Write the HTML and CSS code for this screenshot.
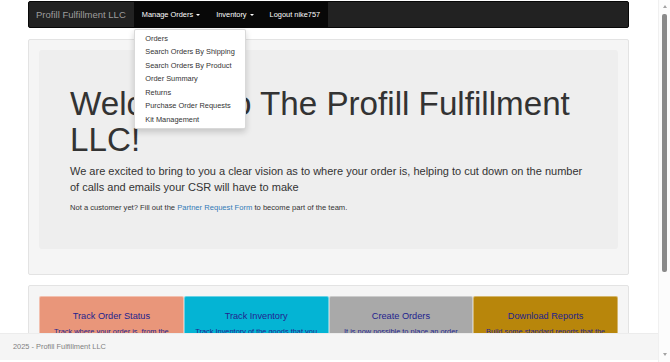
FILE: index.html
```html
<!DOCTYPE html>
<html lang="en">
<head>
    <meta charset="UTF-8">
    <meta name="viewport" content="width=device-width, initial-scale=1.0">
    <title>Profill Fulfillment LLC</title>
    <link rel="stylesheet" href="styles.css">
</head>
<body>
    <div class="viewport">
        <div class="page">
            <div class="container">
                <nav class="navbar">
                    <a class="brand" href="#">Profill Fulfillment LLC</a>
                    <ul class="nav">
                        <li class="dropdown">
                            <a href="#">Manage Orders <span class="caret"></span></a>
                            <ul class="dropdown-menu">
                                <li><a href="#">Orders</a></li>
                                <li><a href="#">Search Orders By Shipping</a></li>
                                <li><a href="#">Search Orders By Product</a></li>
                                <li><a href="#">Order Summary</a></li>
                                <li><a href="#">Returns</a></li>
                                <li><a href="#">Purchase Order Requests</a></li>
                                <li><a href="#">Kit Management</a></li>
                            </ul>
                        </li>
                        <li><a href="#">Inventory <span class="caret"></span></a></li>
                        <li><a href="#">Logout nike757</a></li>
                    </ul>
                </nav>

                <div class="well">
                    <div class="jumbotron">
                        <h1>Welcome To The Profill Fulfillment LLC!</h1>
                        <p class="lead">We are excited to bring to you a clear vision as to where your order is, helping to cut down on the number of calls and emails your CSR will have to make</p>
                        <p>Not a customer yet? Fill out the <a href="#">Partner Request Form</a> to become part of the team.</p>
                    </div>
                </div>

                <div class="well">
                    <div class="tiles">
                        <div class="tile tile-salmon">
                            <h4>Track Order Status</h4>
                            <p>Track where your order is, from the warehouse floor to your door.</p>
                        </div>
                        <div class="tile tile-cyan">
                            <h4>Track Inventory</h4>
                            <p>Track Inventory of the goods that you have stored with us.</p>
                        </div>
                        <div class="tile tile-gray">
                            <h4>Create Orders</h4>
                            <p>It is now possible to place an order right from this site.</p>
                        </div>
                        <div class="tile tile-gold">
                            <h4>Download Reports</h4>
                            <p>Build some standard reports that the team uses every day.</p>
                        </div>
                    </div>
                </div>
            </div>
        </div>

        <div class="scrollbar">
            <span class="arrow-up"></span>
            <div class="thumb"></div>
            <span class="arrow-down"></span>
        </div>
    </div>

    <footer class="footer">2025 - Profill Fulfillment LLC</footer>
</body>
</html>
```

FILE: styles.css
```css
html, body {
    margin: 0;
    height: 100%;
    overflow: hidden;
}

body {
    font-family: 'Liberation Sans', Arial, Helvetica, sans-serif;
    font-size: 7.4px;
    line-height: 1.42857;
    color: #333;
    background: #fff;
}

a {
    text-decoration: none;
}

ul {
    list-style: none;
    margin: 0;
    padding: 0;
}

.viewport {
    display: flex;
    height: 100%;
}

.page {
    flex: 1;
    padding-right: 1px;
    overflow: hidden;
}

.container {
    width: 601px;
    margin: 0 auto;
}

/* top navbar */
.navbar {
    display: flex;
    height: 27px;
    box-sizing: border-box;
    margin-top: 1px;
    margin-bottom: 11px;
    background: #222;
    border: 1px solid #080808;
    border-radius: 2px;
}

.brand {
    padding: 0 8px 0 7px;
    font-size: 9.5px;
    line-height: 25px;
    color: #9d9d9d;
}

.nav {
    display: flex;
    background: #080808;
}

.nav > li {
    position: relative;
}

.nav > li > a {
    display: block;
    padding: 0 8px;
    line-height: 25px;
    color: #fff;
}

.caret {
    display: inline-block;
    width: 0;
    height: 0;
    margin-left: 1px;
    vertical-align: middle;
    border-top: 2px solid #fff;
    border-left: 2px solid transparent;
    border-right: 2px solid transparent;
}

.dropdown-menu {
    position: absolute;
    top: calc(100% + 2px);
    left: 0;
    z-index: 10;
    padding: 2px 0;
    background: #fff;
    border: 1px solid rgba(0,0,0,0.15);
    border-radius: 2px;
    box-shadow: 0 3px 6px rgba(0,0,0,0.175);
    white-space: nowrap;
}

.dropdown-menu a {
    display: block;
    padding: 1.6px 10.5px;
    line-height: 10.3px;
    color: #333;
}

/* wells */
.well {
    padding: 10px;
    margin-bottom: 10px;
    background: #f5f5f5;
    border: 1px solid #e3e3e3;
    border-radius: 2px;
}

.jumbotron {
    padding: 25px 30px 27px 31px;
    margin-bottom: 15px;
    background: #eee;
    border-radius: 3px;
}

.jumbotron h1 {
    margin: 10.5px 0 5.3px;
    font-size: 33.2px;
    font-weight: 500;
    line-height: 1.1;
}

.jumbotron p {
    margin: 0 0 8px;
    font-size: 7.6px;
}

.jumbotron .lead {
    font-size: 11px;
    line-height: 15.8px;
}

.jumbotron a {
    color: #337ab7;
}

/* feature tiles */
.tiles {
    display: grid;
    grid-template-columns: repeat(4, 1fr);
}

.tile {
    height: 120px;
    padding: 0 10px;
    text-align: center;
    color: #23238e;
    border: 1px solid rgba(255,255,255,0.4);
    border-radius: 2px;
}

.tile h4 {
    margin: 14px 0 6px;
    font-size: 9.2px;
    font-weight: 500;
    line-height: 1.1;
}

.tile p {
    margin: 0;
}

.tile-salmon { background: #e9967a; }
.tile-cyan { background: #04b4d4; }
.tile-gray { background: #a9a9a9; }
.tile-gold { background: #b8860b; }

/* fixed footer */
.footer {
    position: fixed;
    left: 0;
    right: 12px;
    bottom: 0;
    height: 29px;
    box-sizing: border-box;
    padding-left: 13px;
    line-height: 26px;
    color: #808080;
    background: #f5f5f5;
    border-top: 1px solid #ececec;
    border-bottom: 2px solid #fff;
}

/* scrollbar */
.scrollbar {
    display: flex;
    flex-direction: column;
    align-items: center;
    width: 12px;
    background: #fcfcfc;
    border-left: 1px solid #f0f0f0;
    box-sizing: border-box;
}

.arrow-up, .arrow-down {
    width: 0;
    height: 0;
    border-left: 2.5px solid transparent;
    border-right: 2.5px solid transparent;
}

.arrow-up {
    margin-top: 5px;
    border-bottom: 3px solid #a3a3a3;
}

.arrow-down {
    margin-top: auto;
    margin-bottom: 6px;
    border-top: 3px solid #a3a3a3;
}

.thumb {
    width: 5px;
    height: 258px;
    margin-top: 6px;
    background: #8a8a8a;
    border-radius: 2px;
}
```
